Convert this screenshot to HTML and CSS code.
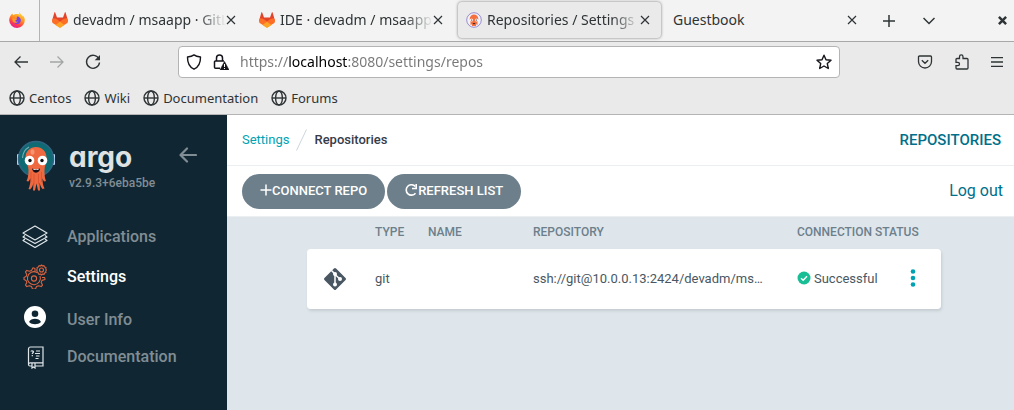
FILE: index.html
```html
<!DOCTYPE html>
<html lang="en">
<head>
<meta charset="utf-8">
<meta name="viewport" content="width=device-width, initial-scale=1">
<title>Repositories / Settings</title>
<link rel="stylesheet" href="styles.css">
</head>
<body>
<svg class="defs" aria-hidden="true">
  <symbol id="fox" viewBox="0 0 16 16">
    <path fill="#e24329" d="M3.2.4a.4.4 0 0 0-.8 0L.1 8.6 8 15 15.900 8.600 13.600.400a.4.4 0 0 0-.8 0L11 5.500H5z"/>
    <path fill="#fc6d26" d="M.1 8.600 1 6.200c2 0 4 .8 5.300 2L8 9.500l1.700-1.300c1.300-1.200 3.300-2 5.300-2l.9 2.400c.2 1-.1 2-.9 2.700L8 15.500 1 11.300C.2 10.600-.1 9.600.1 8.600z"/>
    <path fill="#fca326" d="M8 9.800 3.500 12.900 8 16l4.500-3.100z"/>
  </symbol>
  <symbol id="cross" viewBox="0 0 10 10"><path d="M1 1l8 8M9 1L1 9" fill="none" stroke="currentColor" stroke-width="1.2"/></symbol>
  <symbol id="globe" viewBox="0 0 16 16"><g fill="none" stroke="currentColor" stroke-width="1.4"><circle cx="8" cy="8" r="7"/><ellipse cx="8" cy="8" rx="3.400" ry="7"/><path d="M1 8h14"/></g></symbol>
</svg>

<header class="browser">
  <div class="tabstrip">
    <div class="brand">
      <svg width="16" height="16" viewBox="0 0 16 16" role="img" aria-label="Firefox">
        <defs><linearGradient id="flame" x1=".8" y1="0" x2=".3" y2="1"><stop offset="0" stop-color="#ffe03a"/><stop offset=".45" stop-color="#ff9020"/><stop offset=".75" stop-color="#ff3a4c"/><stop offset="1" stop-color="#e0209a"/></linearGradient></defs>
        <path fill="url(#flame)" d="M10.500 0c-.7 1.400.1 2.400 1.200 3.300C9.500 1.500 6 1.500 4.300 3.300 3.700 3 3.500 2.300 3.500 1.600 1.500 3 .2 5.700.2 8.300A7.800 7.800 0 0 0 15.800 8c0-2-1-4-2.200-4.800.1.6.2 1.100.1 1.500C13.200 2.800 11 2 10.500 0z"/>
        <path fill="#7542e5" d="M8 4.500a3.800 3.800 0 1 1-3.500 2.400l2 .2c.8-.2 1.100-.9 2-1.200C7.600 5.500 7.600 5 8 4.500z"/>
        <path fill="#ff9a24" d="M3 6.500c1.300-.6 2.500-.3 3.400.2l1.900.3c-.4.9-1.600.9-2 1.500.1 1.300 1.700 1.700 3 1-1 1.700-4.300 1.900-5.500 0z"/>
      </svg>
    </div>
    <div class="tabs" role="tablist">
      <div class="tab"><svg class="favicon"><use href="#fox"/></svg><button class="tab-title fade" role="tab">devadm / msaapp · GitL</button><button class="tab-close" aria-label="Close tab"><svg><use href="#cross"/></svg></button></div>
      <div class="tab"><svg class="favicon"><use href="#fox"/></svg><button class="tab-title fade" role="tab">IDE · devadm / msaapp</button><button class="tab-close" aria-label="Close tab"><svg><use href="#cross"/></svg></button></div>
      <div class="tab tab-active">
        <svg class="favicon" viewBox="0 0 16 16"><circle cx="8" cy="8" r="7.300" fill="#eef3fb" stroke="#9b8bd0"/><path fill="#f4703f" d="M3.700 6.800a4.300 4.300 0 0 1 8.600 0c0 1.500-.8 2-.8 3.200V13l-1.500-.7V14H6v-1.700L4.500 13v-3c0-1.200-.8-1.700-.8-3.200z"/><circle cx="5.500" cy="8" r="1.500" fill="#fff"/><circle cx="10.500" cy="8" r="1.500" fill="#fff"/><circle cx="5.700" cy="8" r=".6"/><circle cx="10.300" cy="8" r=".6"/><path d="M6.500 11h3l-1 1.300h-1z" fill="#3a2430"/></svg>
        <button class="tab-title fade" role="tab" aria-selected="true">Repositories / Settings</button><button class="tab-close" aria-label="Close tab"><svg><use href="#cross"/></svg></button></div>
      <div class="tab"><button class="tab-title" role="tab">Guestbook</button><button class="tab-close" aria-label="Close tab"><svg><use href="#cross"/></svg></button></div>
    </div>
    <div class="strip-actions">
      <button aria-label="New tab"><svg width="12" height="12" viewBox="0 0 12 12"><path d="M6 0v12M0 6h12" stroke="currentColor" stroke-width="1.500"/></svg></button>
      <button aria-label="List all tabs"><svg width="12" height="8" viewBox="0 0 12 8"><path d="M.5 1 6 6.500 11.500 1" fill="none" stroke="currentColor" stroke-width="1.500"/></svg></button>
      <button class="window-close" aria-label="Close window"><svg width="9" height="9" viewBox="0 0 8 8"><path d="M.8.8l6.400 6.400M7.200.8.8 7.200" stroke="currentColor" stroke-width="2.200"/></svg></button>
    </div>
  </div>

  <div class="toolbar">
    <div class="nav-buttons">
      <button aria-label="Back"><svg width="16" height="16" viewBox="0 0 16 16"><path d="M15 8H2M7.500 2.500 2 8l5.500 5.500" fill="none" stroke="currentColor" stroke-width="1.300"/></svg></button>
      <button aria-label="Forward" disabled><svg width="16" height="16" viewBox="0 0 16 16"><path d="M1 8h13M8.500 2.500 14 8l-5.500 5.500" fill="none" stroke="currentColor" stroke-width="1.300"/></svg></button>
      <button aria-label="Reload"><svg width="16" height="16" viewBox="0 0 16 16"><path d="M13.900 5A6.500 6.500 0 1 0 14.500 8.500" fill="none" stroke="currentColor" stroke-width="1.400"/><path d="M15 1v5.300H9.700z" fill="currentColor"/></svg></button>
    </div>
    <div class="urlbar">
      <svg width="16" height="16" viewBox="0 0 16 16"><path d="M8 .9c1.500 1.200 4 1.900 6.500 2.100.1 6.100-1.200 9.800-6.500 12.200C2.700 12.800 1.400 9.100 1.500 3 4 2.800 6.500 2.100 8 .9z" fill="none" stroke="currentColor" stroke-width="1.400" stroke-linejoin="round"/></svg>
      <svg width="16" height="16" viewBox="0 0 16 16"><path d="M3.500 7V4a3 3 0 0 1 6 0v3M7 14.300H2.500a1 1 0 0 1-1-1V8a1 1 0 0 1 1-1h8.500" fill="none" stroke="currentColor" stroke-width="1.500"/><path d="M11.500 7.500 16 16H7z" fill="currentColor" stroke="currentColor" stroke-width=".6"/><path d="M11.500 10v3M11.500 14v1" stroke="#fff"/></svg>
      <input class="address" type="text" aria-label="Address" value="https://localhost:8080/settings/repos">
      <button aria-label="Bookmark this page"><svg width="16" height="16" viewBox="0 0 16 16"><path d="m8 1.200 2 4.500 5 .6-3.700 3.300 1 4.900L8 12l-4.300 2.500 1-4.900L1 6.300l5-.6z" fill="none" stroke="currentColor" stroke-width="1.400" stroke-linejoin="round"/></svg></button>
    </div>
    <div class="tool-buttons">
      <button aria-label="Save to Pocket"><svg width="16" height="16" viewBox="0 0 16 16"><path d="M2.500 2h11a1 1 0 0 1 1 1v4.500a6.500 6.500 0 0 1-13 0V3a1 1 0 0 1 1-1zM4.800 6.300 8 9.300l3.200-3" fill="none" stroke="currentColor" stroke-width="1.300"/></svg></button>
      <button aria-label="Extensions"><svg width="16" height="16" viewBox="0 0 16 16"><path d="M2 8.300V5.500a1 1 0 0 1 1-1h2.500V2.700a1.700 1.700 0 0 1 3.500 0v1.800h4a1 1 0 0 1 1 1V14a1 1 0 0 1-1 1H3a1 1 0 0 1-1-1v-2.300h1.800a1.700 1.700 0 0 0 0-3.400z" fill="none" stroke="currentColor" stroke-width="1.300"/></svg></button>
      <button aria-label="Open menu"><svg width="12" height="10" viewBox="0 0 12 10"><path d="M0 .7h12M0 5h12M0 9.300h12" stroke="currentColor" stroke-width="1.300"/></svg></button>
    </div>
  </div>

  <nav class="bookmarks" aria-label="Bookmarks">
    <a href="#"><svg><use href="#globe"/></svg>Centos</a>
    <a href="#"><svg><use href="#globe"/></svg>Wiki</a>
    <a href="#"><svg><use href="#globe"/></svg>Documentation</a>
    <a href="#"><svg><use href="#globe"/></svg>Forums</a>
  </nav>
</header>

<div class="app">
  <aside class="sidebar">
    <div class="logo">
      <svg width="40" height="52" viewBox="0 0 40 52" role="img" aria-label="Argo mascot">
        <rect x="1" y="14" width="4" height="11" rx="1" fill="#b5d2f3"/><rect x="35" y="14" width="4" height="11" rx="1" fill="#b5d2f3"/>
        <circle cx="20" cy="19" r="17.500" fill="#0e6a73" stroke="#2f6480" stroke-width="1.500"/>
        <path d="M6.500 18A13.500 13.500 0 0 1 13 7" fill="none" stroke="#79adb0" stroke-width="1.200"/>
        <path fill="#ee6940" d="M9.500 18C9.500 11 14 7 20 7s10.500 4 10.500 11c0 5-2 8-2 12 0 5 .2 8 1.500 11l-2 .5c-1-1-1-3-1.500-3 0 4 .5 7 2 10l-2 .5c-2-2-2.500-5-3-6.500l.5 8h-2l-1.500-7-1.500 7h-2l.5-8c-.5 2-1 5-3.500 7l-1.500-.6c1.500-3 2-7 2-10.400-.5 0-1 2-2 3l-2-.5c1.500-3 2-6 2-11 0-4-2.500-7-2.500-12z"/>
        <path d="M15 32v10M18 34v10M22.500 34v10M25.500 32v10" stroke="#d9512f" stroke-width=".8"/>
        <ellipse cx="16.500" cy="12" rx="2" ry="2.800" fill="#f79470"/>
        <circle cx="13.500" cy="20.500" r="4.800" fill="#fff"/><circle cx="26.500" cy="20.500" r="4.800" fill="#fff"/>
        <circle cx="14" cy="20.500" r="1.700" fill="#111"/><circle cx="26" cy="20.500" r="1.700" fill="#111"/>
        <path d="M16 28.500c2 1 6 1 8 0 0 5-7 6-8 0z" fill="#171018"/><path d="M17.500 29c2 .5 3.500.5 5 0v1h-5z" fill="#fff"/>
      </svg>
      <div class="wordmark">
        <span class="name">argo</span>
        <span class="version">v2.9.3+6eba5be</span>
      </div>
      <button class="collapse" aria-label="Collapse sidebar"><svg width="18" height="16" viewBox="0 0 18 16"><path d="M17 8H2M8 1.500 1.500 8 8 14.500" fill="none" stroke="currentColor" stroke-width="2.200" stroke-linecap="round" stroke-linejoin="round"/></svg></button>
    </div>
    <nav class="menu" aria-label="Main">
      <a href="#"><svg width="26" height="26" viewBox="0 0 26 26"><g fill="none" stroke="#dfe6ea" stroke-width="1.200" stroke-linejoin="round"><path d="M13 3 25 10l-12 7L1 10z"/><path d="M3 12.500 1 14l12 6.500L25 14l-2-1.500"/><path d="M3 16 1 17.500 13 24.500l12-7L23 16"/></g></svg><span>Applications</span></a>
      <a href="#" class="current" aria-current="page"><svg width="26" height="26" viewBox="0 0 26 26"><g fill="none" stroke="#dc6440" stroke-width="1.100" stroke-linejoin="round"><path d="M13 8.200V5.500l-2-.7-1.500 2.700-2 .8-2.700-.9-1.300 1.500 1.300 2.700-.8 2-2 .9v2l2 .9.8 2-1.300 2.700 1.300 1.500 2.700-.9 2 .8 1 2.500h3l1-2.500 2-.8 2.700.9 1.300-1.500-1.300-2.700.8-2 3-.9-.3-2h-2.700"/><path d="M15 9.500a6.500 6.500 0 1 0 3 3.500"/><circle cx="12" cy="15.500" r="2.600"/><path d="m18.500 3 1-1 1 1 1.500-.4.5 1.500 1.500.5-.3 1.400.8 1-.8 1 .3 1.400-1.500.6-.5 1.500-1.500-.5-1 1-1-1-1.500.5-.6-1.500-1.400-.6.300-1.400-.8-1 .8-1-.3-1.400 1.400-.5.600-1.500z"/><circle cx="19.500" cy="7" r="2"/></g></svg><span>Settings</span></a>
      <a href="#" class="account"><svg width="26" height="26" viewBox="0 0 26 26"><circle cx="13" cy="14" r="11" fill="#fff"/><circle cx="13" cy="10.800" r="3.300" fill="#102733"/><path d="M7 19c1-2.500 3.500-3.200 6-3.200s5 .7 6 3.200c-3 3-9 3-12 0z" fill="#102733"/></svg><span>User Info</span></a>
      <a href="#"><svg width="26" height="26" viewBox="0 0 26 26"><g fill="none" stroke="#dfe6ea" stroke-width="1.200"><path d="M10 23H8a1.500 1.500 0 0 1-1.500-1.500V6a2 2 0 0 1 2-2H21v19h-8M6.500 21.500c0-1 .8-1.700 1.800-1.700H21"/><path d="M10 20v5l1.500-1 1.500 1v-5M14 8h4M13 10.500h5M14 13h3.500M13.500 15.500h3"/><path d="M9 8.500c0-1 2.500-1 2.500.3 0 1-1.200 1-1.200 2.200m0 1v1.200"/></g></svg><span>Documentation</span></a>
    </nav>
  </aside>

  <main class="content">
    <div class="topbar">
      <nav class="crumbs" aria-label="Breadcrumb">
        <a href="#">Settings</a>
        <svg width="11" height="22" viewBox="0 0 11 22" aria-hidden="true"><path d="M.5 21.500 10.500.5" stroke="#ccd6dd"/></svg>
        <strong>Repositories</strong>
      </nav>
      <h1>REPOSITORIES</h1>
    </div>
    <div class="actions">
      <button class="pill"><svg width="12" height="12" viewBox="0 0 12 12"><path d="M6 .5v11M.5 6h11" stroke="currentColor" stroke-width="1.500"/></svg>CONNECT REPO</button>
      <button class="pill"><svg width="13" height="12" viewBox="0 0 13 12"><path d="M10.300 2.500A5.200 5.200 0 1 0 10.500 9.200" fill="none" stroke="currentColor" stroke-width="1.600"/><path d="M12 0v5.200H7V3.800h3.400V0z" fill="currentColor"/></svg>REFRESH LIST</button>
      <a class="logout" href="#">Log out</a>
    </div>
    <div class="list">
      <table class="repos">
        <colgroup><col class="c-icon"><col class="c-type"><col class="c-name"><col><col class="c-status"><col class="c-menu"></colgroup>
        <thead><tr><td></td><th>TYPE</th><th>NAME</th><th>REPOSITORY</th><th colspan="2">CONNECTION STATUS</th></tr></thead>
        <tbody>
          <tr>
            <td class="repo-icon"><svg width="24" height="24" viewBox="0 0 24 24"><rect x="3.800" y="3.800" width="16.400" height="16.400" rx="1.500" transform="rotate(45 12 12)" fill="#495763"/><path d="M8.500 3.500 12 7v11M12 7.500l5 4.500" fill="none" stroke="#fff" stroke-width="1.500"/><circle cx="12" cy="7" r="2" fill="#fff"/><circle cx="17" cy="12" r="2" fill="#fff"/><circle cx="12" cy="17.500" r="2" fill="#fff"/></svg></td>
            <td>git</td>
            <td></td>
            <td class="url">ssh://git@10.0.0.13:2424/devadm/ms…</td>
            <td><span class="status"><svg width="14" height="14" viewBox="0 0 14 14"><circle cx="7" cy="7" r="6.500" fill="#18be94"/><path d="m4 7.200 2.200 2.100L10 5.300" fill="none" stroke="#fff" stroke-width="1.500"/></svg>Successful</span></td>
            <td><button class="more" aria-label="Repository actions"><svg width="6" height="18" viewBox="0 0 6 18"><g fill="#00a2b3"><circle cx="3" cy="2.500" r="2.300"/><circle cx="3" cy="9" r="2.300"/><circle cx="3" cy="15.500" r="2.300"/></g></svg></button></td>
          </tr>
        </tbody>
      </table>
    </div>
  </main>
</div>
</body>
</html>
```

FILE: styles.css
```css
* { box-sizing: border-box; }

body {
  margin: 0;
  min-height: 100vh;
  display: flex;
  flex-direction: column;
  font-family: Roboto, "Liberation Sans", sans-serif;
}

button {
  padding: 0;
  border: 0;
  background: none;
  color: inherit;
  font: inherit;
}

a { text-decoration: none; }
svg { flex: none; }
.defs { display: none; }

/* Browser frame */
.browser {
  background: #eaeaea;
  border-bottom: 1px solid #b4b4b4;
  color: #2e3436;
  font: 14px/20px "Noto Sans", sans-serif;
}

.tabstrip {
  display: flex;
  height: 42px;
  background: #f3f3f3;
  border-bottom: 1px solid #a8a8a8;
}

.brand {
  width: 40px;
  padding: 12px 9px;
  border-right: 1px solid #b4b4b4;
}

.tabs {
  display: flex;
  flex: 1;
  gap: 4px;
  padding: 2px 4px 3px;
  min-width: 0;
}

.tab {
  display: flex;
  flex: 0 1 203px;
  align-items: center;
  min-width: 0;
  padding: 0 11px 0 8px;
  border-radius: 4px;
}

.tab-active {
  background: #eaeaea;
  box-shadow: 0 0 3px #777;
}

.favicon {
  width: 16px;
  height: 16px;
  margin-right: 5px;
}

.tab-title {
  flex: 1;
  min-width: 0;
  overflow: hidden;
  white-space: nowrap;
  text-align: left;
}

.fade { mask-image: linear-gradient(to left, transparent, #000 28px); }

.tab-close { display: flex; }

.tab-close svg {
  width: 10px;
  height: 10px;
}

.strip-actions {
  display: flex;
  align-items: center;
  gap: 28px;
  padding-right: 7px;
}

.strip-actions button { display: flex; }
.strip-actions .window-close { margin-left: 35px; }

.toolbar {
  display: grid;
  grid-template-columns: 178px 1fr 174px;
  align-items: center;
  padding: 4px 0;
}

.nav-buttons,
.tool-buttons {
  display: flex;
  align-items: center;
  gap: 20px;
  padding-left: 13px;
}

.tool-buttons {
  justify-content: flex-end;
  gap: 21px;
  padding-right: 11px;
}

.toolbar button { display: flex; }
.toolbar button:disabled { color: #a4a6a6; }

.urlbar {
  display: flex;
  align-items: center;
  gap: 11px;
  height: 32px;
  padding: 0 7px;
  border: 1px solid #b4b4b4;
  border-radius: 4px;
  background: #fff;
  color: #15141a;
}

/* The host part of the address is darker than the rest. */
.address {
  flex: 1;
  min-width: 0;
  padding: 0;
  border: 0;
  outline: 0;
  background: linear-gradient(to right, #777 49px, #000 49px 108px, #777 108px);
  background-clip: text;
  -webkit-text-fill-color: transparent;
  color: #777;
  font: 14px/20px "Noto Sans", sans-serif;
}

.bookmarks {
  display: flex;
  gap: 13px;
  padding: 6px 9px;
  font-size: 13px;
}

.bookmarks a {
  display: flex;
  align-items: center;
  gap: 4px;
  color: inherit;
}

.bookmarks svg {
  width: 16px;
  height: 16px;
}

/* Application */
.app {
  display: flex;
  flex: 1;
}

.sidebar {
  width: 227px;
  background: #102733;
  color: #818d94;
}

.logo {
  display: flex;
  align-items: flex-start;
  padding: 25px 30px 0 16px;
}

.wordmark {
  display: flex;
  flex: 1;
  flex-direction: column;
  padding-left: 13px;
}

.name {
  color: #dee2e3;
  font: 700 28px/34px Inter, sans-serif;
  font-feature-settings: "cv11";
}

.version {
  font-size: 12px;
  font-weight: 500;
  line-height: 18px;
}

.collapse {
  display: flex;
  padding-top: 7px;
}

.menu {
  display: flex;
  flex-direction: column;
  gap: 12px;
  padding: 30px 22px 0;
}

.menu a {
  display: flex;
  align-items: center;
  gap: 19px;
  height: 28px;
  color: inherit;
  font-size: 16px;
  font-weight: 500;
}

.menu .current { color: #fff; }
.menu .account span { padding-top: 6px; }

.content {
  display: flex;
  flex: 1;
  flex-direction: column;
  min-width: 0;
  background: #fff;
}

.topbar,
.actions {
  display: flex;
  align-items: center;
  height: 51px;
  padding: 0 13px 0 15px;
  border-bottom: 1px solid #eceff1;
}

.topbar { justify-content: space-between; }

.crumbs {
  display: flex;
  align-items: center;
  gap: 7px;
  font-size: 13px;
  line-height: 14px;
}

.crumbs a { color: #00a2b3; }

.crumbs strong {
  color: #363c4a;
  font-weight: 500;
}

.topbar h1 {
  margin: 0;
  color: #006f8a;
  font-size: 15px;
  font-weight: 500;
}

.actions {
  gap: 2px;
  padding-right: 11px;
}

.pill {
  display: flex;
  align-items: center;
  height: 35px;
  padding: 0 18px 2px;
  border-radius: 18px;
  background: #6d7f8b;
  color: #fff;
  font-size: 13px;
  font-weight: 500;
}

.logout {
  margin-left: auto;
  padding-bottom: 2px;
  color: #006f8a;
  font-size: 16px;
}

.list {
  flex: 1;
  padding: 0 73px 40px 80px;
  background: #dee6eb;
}

.repos {
  width: 100%;
  table-layout: fixed;
  border-collapse: collapse;
  color: #495763;
  font-size: 13px;
}

.c-icon { width: 68px; }
.c-type { width: 53px; }
.c-name { width: 105px; }
.c-status { width: 106px; }
.c-menu { width: 38px; }

.repos th,
.repos td {
  padding: 0 0 2px;
  text-align: left;
}

.repos th {
  height: 32px;
  color: #6d7f8b;
  font-size: 12px;
  font-weight: 500;
}

.repos tbody tr {
  border-radius: 4px;
  box-shadow: 1px 2px 3px #c4ccd2;
}

.repos tbody td {
  height: 60px;
  background: #fff;
}

.repos tbody td:first-child { border-radius: 4px 0 0 4px; }
.repos tbody td:last-child { border-radius: 0 4px 4px 0; }

.repos .repo-icon { padding: 0 0 0 16px; }
.repo-icon svg { display: block; }

.repos .url { white-space: nowrap; }

.status {
  display: flex;
  align-items: center;
  gap: 3px;
}

.more {
  display: flex;
  padding: 0 7px;
}
```
